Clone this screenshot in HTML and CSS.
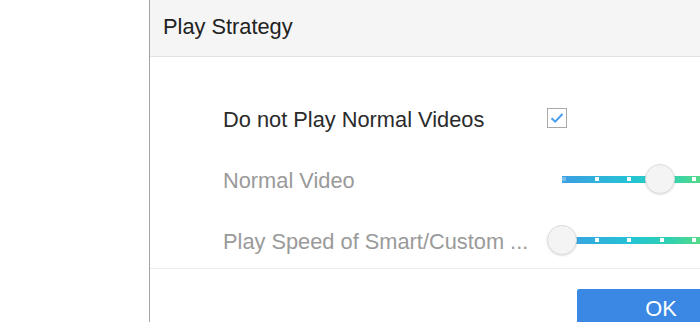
FILE: index.html
```html
<!DOCTYPE html>
<html>
  <head>
    <link rel="stylesheet" href="styles.css">
  </head>
  <body>
    <div class="page">
      <div class="sideSpace"></div>
      <div class="dialog">
        <div class="dialogHead">Play Strategy</div>
        <div class="dialogBody">
          <div class="row">
            <div class="label">Do not Play Normal Videos</div>
            <div class="checkBox">
              <svg width="14" height="12" viewBox="0 0 14 12"><path d="M1.5 6.2 L5.2 9.6 L12.5 2" fill="none" stroke="#4a9ef0" stroke-width="2"/></svg>
            </div>
          </div>
          <div class="row">
            <div class="label grey">Normal Video</div>
            <div class="slider">
              <div class="track">
                <span class="dot"></span><span class="dot"></span><span class="dot"></span><span class="dot"></span><span class="dot"></span><span class="dot"></span>
              </div>
              <div class="knob" style="left: 98px"></div>
            </div>
          </div>
          <div class="row">
            <div class="label grey">Play Speed of Smart/Custom ...</div>
            <div class="slider">
              <div class="track">
                <span class="dot"></span><span class="dot"></span><span class="dot"></span><span class="dot"></span><span class="dot"></span><span class="dot"></span>
              </div>
              <div class="knob" style="left: 0px"></div>
            </div>
          </div>
        </div>
        <div class="dialogFoot">
          <div class="okBtn">OK</div>
        </div>
      </div>
    </div>
  </body>
</html>
```
FILE: styles.css
```css
body{
	margin: 0;
	padding: 0;
	width: 700px;
	height: 322px;
	overflow: hidden;
	background-color: #fff;
	font-family: "Liberation Sans", Arial, sans-serif;
}

.page{
	display: flex;
	height: 322px;
}

.sideSpace{
	width: 149px;
	flex: none;
}

.dialog{
	width: 720px;
	flex: none;
	border-left: 1px solid #a3a3a3;
	display: flex;
	flex-direction: column;
}

.dialog > div{
	flex: none;
}

.dialogHead{
	height: 56px;
	line-height: 54px;
	padding-left: 13px;
	font-size: 21.8px;
	color: #222;
	background-color: #f5f5f5;
	border-bottom: 1px solid #e2e2e2;
}

.dialogBody{
	height: 212px;
	padding-top: 41px;
	box-sizing: border-box;
	display: flex;
	flex-direction: column;
	gap: 21px;
	border-bottom: 1px solid #ececec;
}

.row{
	display: grid;
	grid-template-columns: 324px auto;
	align-items: center;
	height: 40px;
	padding-left: 73px;
}

.label{
	font-size: 21.8px;
	color: #2b2b2b;
	white-space: nowrap;
	padding-top: 3px;
}

.label.grey{
	color: #9a9a9a;
}

.checkBox{
	width: 18px;
	height: 18px;
	border: 1px solid #a9a9a9;
	display: flex;
	align-items: center;
	justify-content: center;
}

.slider{
	position: relative;
	width: 200px;
	height: 30px;
	padding: 0 15px;
	display: flex;
	align-items: center;
}

.track{
	width: 170px;
	height: 7px;
	background: linear-gradient(to right, #3b9fe3 0%, #24c4d3 42%, #2fd0b4 62%, #5cdc80 85%);
	display: flex;
	align-items: center;
	gap: 28.5px;
}

.dot{
	width: 4px;
	height: 4px;
	background-color: #fff;
	flex: none;
}

.dot:first-child{
	opacity: 0.3;
}

.knob{
	position: absolute;
	top: 0;
	width: 28px;
	height: 28px;
	border-radius: 50%;
	background-color: #f4f4f4;
	border: 1px solid #dcdcdc;
	box-shadow: 0 1px 2px rgba(0, 0, 0, 0.12);
}

.dialogFoot{
	padding-top: 20px;
	padding-left: 427px;
}

.okBtn{
	width: 168px;
	height: 40px;
	line-height: 40px;
	background-color: #3a88e4;
	color: #fff;
	text-align: center;
	font-size: 21.8px;
	border-radius: 2px;
}
```
